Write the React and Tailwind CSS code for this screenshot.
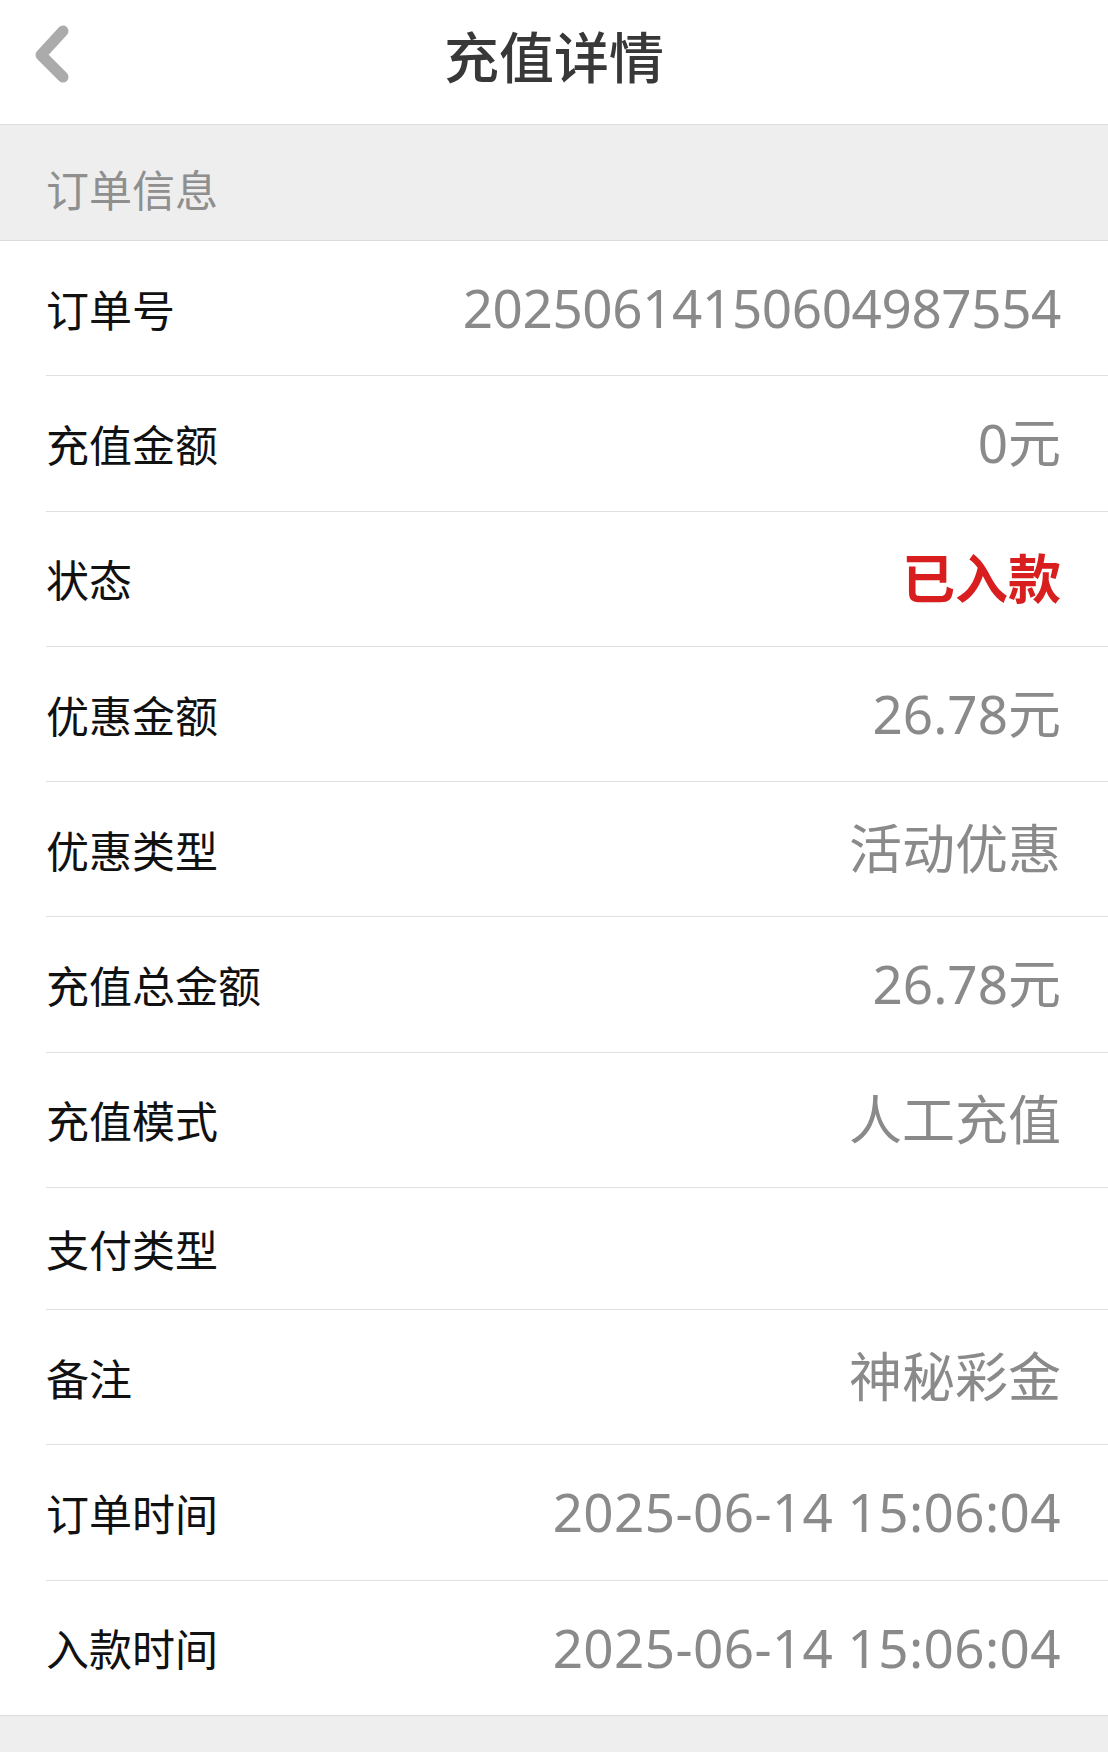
import React from "react";

const rows = [
  { label: "订单号", value: "20250614150604987554", tight: true },
  { label: "充值金额", value: "0元" },
  { label: "状态", value: "已入款", red: true },
  { label: "优惠金额", value: "26.78元" },
  { label: "优惠类型", value: "活动优惠" },
  { label: "充值总金额", value: "26.78元" },
  { label: "充值模式", value: "人工充值" },
  { label: "支付类型", value: "" },
  { label: "备注", value: "神秘彩金" },
  { label: "订单时间", value: "2025-06-14 15:06:04", wide: true },
  { label: "入款时间", value: "2025-06-14 15:06:04", wide: true },
];

const cjk = { fontFamily: '"Noto Sans CJK SC", "Noto Sans", sans-serif' };
const mixed = { fontFamily: '"Noto Sans", "Noto Sans CJK SC", sans-serif' };

export default function App() {
  return (
    <div className="min-h-[1752px] w-full bg-[#eeeeee]" style={cjk}>
      <header className="h-[125px] bg-white border-b border-[#dcdcdc] pb-[16px] grid grid-cols-[1fr_auto_1fr] items-center">
        <div className="pl-[32px] flex items-center">
          <svg width="44" height="60" viewBox="0 0 44 60">
            <polyline
              points="31,7 9,31 31,53"
              fill="none"
              stroke="#ababab"
              strokeWidth="11"
              strokeLinecap="round"
              strokeLinejoin="round"
            />
          </svg>
        </div>
        <h1 className="text-[55px] leading-[64px] font-medium text-[#383838]">充值详情</h1>
        <div />
      </header>

      <div className="h-[116px] bg-[#eeeeee] border-b border-[#dcdcdc] pl-[46px] pt-[38px]">
        <span className="text-[43px] leading-[51px] text-[#8f8f8f]">订单信息</span>
      </div>

      <div className="bg-white border-b border-[#dcdcdc]">
        {rows.map((r, i) => (
          <div key={r.label} className="pl-[46px]">
            <div
              className={
                "flex items-center justify-between pr-[47px] py-[35px] " +
                (i < rows.length - 1 ? "border-b border-[#dfdfdf]" : "")
              }
            >
              <span className="text-[43px] leading-[51px] text-[#111111]">{r.label}</span>
              {r.value ? (
                <span
                  className={
                    "text-[53px] leading-[64.3px] " +
                    (r.tight ? "tracking-[-0.4px] " : "") +
                    (r.wide ? "tracking-[0.4px] " : "") +
                    (r.red ? "text-[#d81e1e] font-bold" : "text-[#8a8a8a]")
                  }
                  style={mixed}
                >
                  {r.value}
                </span>
              ) : null}
            </div>
          </div>
        ))}
      </div>
    </div>
  );
}
